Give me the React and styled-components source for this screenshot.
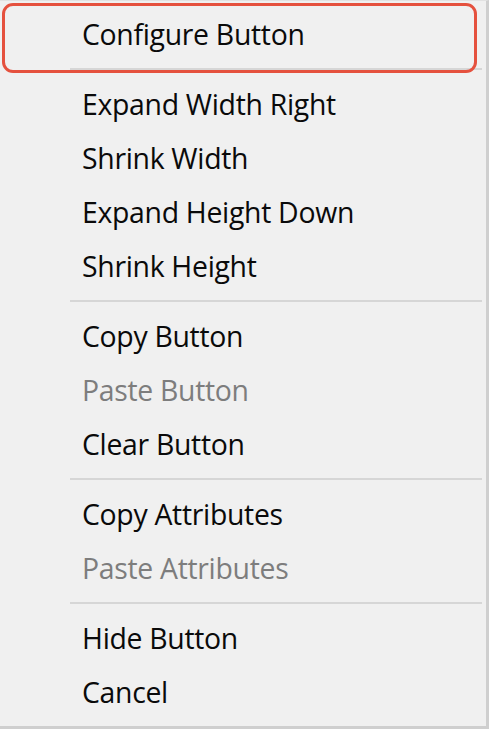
import React from "react";
import styled, { createGlobalStyle } from "styled-components";

const Global = createGlobalStyle`
  html, body { margin: 0; padding: 0; background: #f0f0f0; }
  #root { width: 489px; height: 729px; }
`;

const Menu = styled.div`
  position: relative;
  box-sizing: border-box;
  width: 489px;
  height: 729px;
  background: #f0f0f0;
  border-top: 1px solid #e2e2e2;
  border-right: 3px solid #cfcfcf;
  border-bottom: 3px solid #cfcfcf;
  padding-top: 6px;
  display: flex;
  flex-direction: column;
  font-family: "Open Sans", "Noto Sans", sans-serif;
`;

const Item = styled.div`
  height: 54px;
  display: flex;
  align-items: center;
  padding-left: 82px;
  font-size: 28.4px;
  font-weight: 500;
  letter-spacing: -0.3px;
  color: ${(p) => (p.$disabled ? "#7d7d7d" : "#0a0a0a")};
`;

const Separator = styled.div`
  height: 16px;
  display: flex;
  align-items: center;
  padding-left: 70px;
  padding-right: 4px;
  &::after {
    content: "";
    flex: 1;
    height: 2px;
    background: #d6d6d6;
  }
`;

const Highlight = styled.div`
  position: absolute;
  left: 2px;
  top: 2px;
  width: 475px;
  height: 70px;
  box-sizing: border-box;
  border: 3.5px solid #e5513e;
  border-radius: 11px;
  pointer-events: none;
`;

const groups = [
  [{ label: "Configure Button" }],
  [
    { label: "Expand Width Right" },
    { label: "Shrink Width" },
    { label: "Expand Height Down" },
    { label: "Shrink Height" },
  ],
  [
    { label: "Copy Button" },
    { label: "Paste Button", disabled: true },
    { label: "Clear Button" },
  ],
  [
    { label: "Copy Attributes" },
    { label: "Paste Attributes", disabled: true },
  ],
  [{ label: "Hide Button" }, { label: "Cancel" }],
];

export default function App() {
  return (
    <>
      <Global />
      <Menu>
        {groups.map((g, gi) => (
          <React.Fragment key={gi}>
            {gi > 0 && <Separator />}
            {g.map((it) => (
              <Item key={it.label} $disabled={it.disabled}>
                {it.label}
              </Item>
            ))}
          </React.Fragment>
        ))}
        <Highlight />
      </Menu>
    </>
  );
}
